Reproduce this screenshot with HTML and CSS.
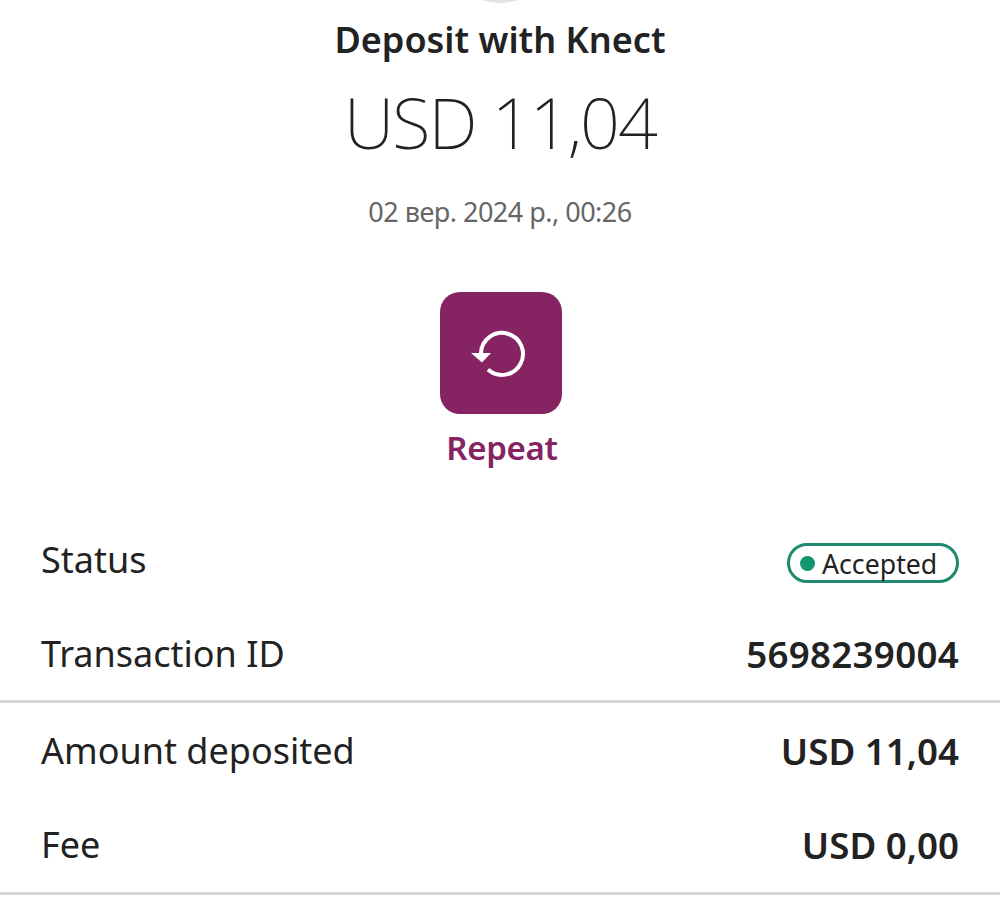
FILE: index.html
```html
<!DOCTYPE html>
<html lang="en">
<head>
<meta charset="utf-8">
<title>Deposit with Knect</title>
<link rel="stylesheet" href="styles.css">
</head>
<body>
<main class="page">
  <div class="logo-clip"><div class="logo-circle"></div></div>
  <h1 class="title">Deposit with Knect</h1>
  <div class="amount">USD 11,04</div>
  <div class="date">02 вер. 2024 р., 00:26</div>
  <div class="action">
    <button class="action-btn" type="button" aria-label="Repeat">
      <svg class="action-icon" viewBox="0 0 60 60" width="60" height="60" aria-hidden="true">
        <path d="M10 30 A 21 21 0 1 1 17 46.6" fill="none" stroke="#fff" stroke-width="4"/>
        <path d="M0 30 H20 L11 39.5 Z" fill="#fff"/>
      </svg>
    </button>
    <div class="action-label">Repeat</div>
  </div>
  <section class="group group-first">
    <div class="row"><span class="label">Status</span><span class="badge"><i class="dot"></i>Accepted</span></div>
    <div class="row"><span class="label">Transaction ID</span><span class="value value-id">5698239004</span></div>
  </section>
  <section class="group group-last">
    <div class="row"><span class="label">Amount deposited</span><span class="value">USD 11,04</span></div>
    <div class="row"><span class="label">Fee</span><span class="value">USD 0,00</span></div>
  </section>
</main>
</body>
</html>
```
FILE: styles.css
```css
* { box-sizing: border-box; }
html, body { margin: 0; padding: 0; background: #fff; }
body { font-family: "Noto Sans", "Open Sans", sans-serif; color: #222; overflow: hidden; }
.page { width: 1000px; height: 897px; display: flex; flex-direction: column; align-items: center; }
.logo-clip { width: 60px; height: 3px; overflow: hidden; display: flex; justify-content: center; align-items: flex-end; }
.logo-circle { flex: none; width: 120px; height: 120px; border-radius: 50%; background: #e4e4e4; }
.title { margin: 16px 0 0; font-size: 36px; line-height: 42px; font-weight: 600; color: #222; }
.amount { margin-top: 16px; font-size: 70px; line-height: 90px; font-weight: 200; letter-spacing: -1.9px; color: #222; }
.date { margin-top: 27px; font-size: 27px; line-height: 36px; color: #666; letter-spacing: -0.5px; }
.action { margin: 62px 0 0 2px; display: flex; flex-direction: column; align-items: center; }
.action-btn { width: 122px; height: 122px; padding: 0; border: 0; border-radius: 20px; background: #862362; display: flex; align-items: center; justify-content: center; }
.action-label { margin-top: 13px; padding-left: 2px; font-size: 33px; line-height: 42px; font-weight: 600; color: #862362; letter-spacing: -0.3px; }
.group { width: 1000px; padding: 0 41px; border-bottom: 3px solid #d6d6d6; }
.group-first { margin-top: 42px; }
.group-last { padding-bottom: 1px; }
.row { height: 93px; display: flex; align-items: center; justify-content: space-between; }
.group .row:first-child { height: 96px; }
.group-last .row:first-child { height: 95px; }
.label { font-size: 36px; color: #222; }
.value { font-size: 36.7px; font-weight: 600; color: #222; }
.value-id { letter-spacing: 0.3px; }
.badge { width: 172px; height: 40px; margin-top: 8px; border: 3px solid #1f8a70; border-radius: 20px; display: flex; align-items: center; padding-left: 10px; font-size: 26.7px; color: #222; }
.dot { width: 15px; height: 15px; border-radius: 50%; background: #129672; margin-right: 7px; flex: none; }
```
